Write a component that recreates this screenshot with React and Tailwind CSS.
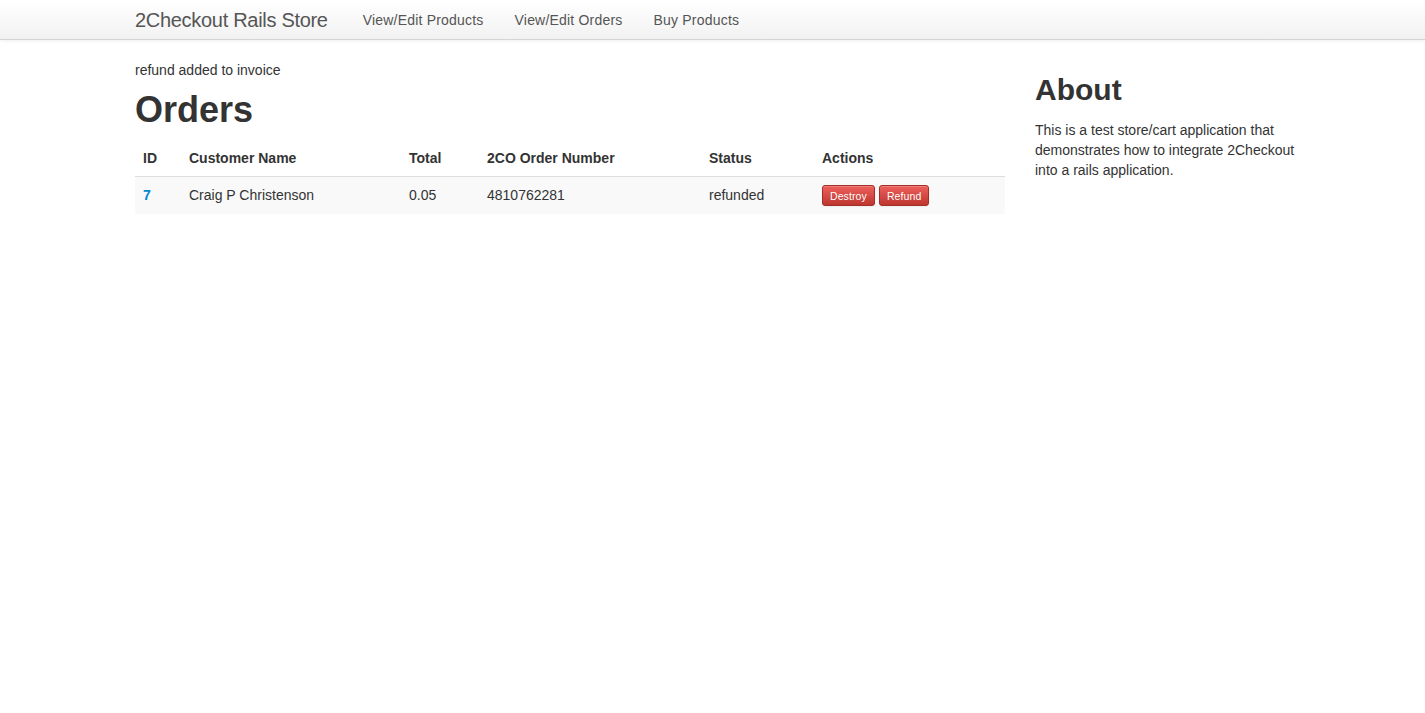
export default function App() {
  const font = { fontFamily: '"Liberation Sans", Arial, sans-serif' };
  const btn =
    "h-[21px] px-[7px] text-[10.5px] leading-[14px] font-normal tracking-[0.1px] text-white rounded-[3px] bg-gradient-to-b from-[#ee5f5b] to-[#bd362f] border border-[#a32d27] shadow-[inset_0_1px_0_rgba(255,255,255,0.2),0_1px_2px_rgba(0,0,0,0.05)]";
  return (
    <div className="min-h-[713px] bg-white text-[14px] leading-[20px] text-[#333]" style={font}>
      <div className="h-[40px] bg-gradient-to-b from-white to-[#f2f2f2] border-b border-[#d4d4d4] shadow-[0_1px_4px_rgba(0,0,0,0.065)]">
        <div className="pl-[135px] flex items-center h-[40px]">
          <span className="text-[20px] font-light text-[#555] pr-[20px] tracking-[-0.3px]">2Checkout Rails Store</span>
          <nav className="flex tracking-[0.2px]">
            <a className="px-[15px] text-[#555]">View/Edit Products</a>
            <a className="pl-[16px] pr-[15px] text-[#555]">View/Edit Orders</a>
            <a className="pl-[16px] pr-[15px] text-[#555]">Buy Products</a>
          </nav>
        </div>
      </div>
      <div className="pl-[135px] pt-[20px] flex gap-[30px]">
        <div className="w-[870px]">
          <p>refund added to invoice</p>
          <h1 className="text-[36px] leading-[40px] font-bold my-[10px] text-[#333]">Orders</h1>
          <table className="w-full border-collapse text-left">
            <thead>
              <tr>
                <th className="p-[8px] w-[46px]">ID</th>
                <th className="p-[8px] w-[220px]">Customer Name</th>
                <th className="p-[8px] w-[78px]">Total</th>
                <th className="p-[8px] w-[222px]">2CO Order Number</th>
                <th className="p-[8px] w-[113px]">Status</th>
                <th className="p-[8px]">Actions</th>
              </tr>
            </thead>
            <tbody>
              <tr className="bg-[#f9f9f9] border-t border-[#ddd]">
                <td className="p-[8px] pt-[7px] pb-[9px] font-bold text-[#0088cc]">7</td>
                <td className="p-[8px] pt-[7px] pb-[9px]">Craig P Christenson</td>
                <td className="p-[8px] pt-[7px] pb-[9px]">0.05</td>
                <td className="p-[8px] pt-[7px] pb-[9px]">4810762281</td>
                <td className="p-[8px] pt-[7px] pb-[9px]">refunded</td>
                <td className="p-[8px] pt-[8px] pb-[8px]">
                  <div className="flex gap-[4px]">
                    <button className={btn} style={font}>Destroy</button>
                    <button className={btn} style={font}>Refund</button>
                  </div>
                </td>
              </tr>
            </tbody>
          </table>
        </div>
        <div className="w-[270px]">
          <h2 className="text-[30px] leading-[40px] font-bold mt-[10px] mb-[10px] text-[#333]">About</h2>
          <p>This is a test store/cart application that demonstrates how to integrate 2Checkout into a rails application.</p>
        </div>
      </div>
    </div>
  );
}
